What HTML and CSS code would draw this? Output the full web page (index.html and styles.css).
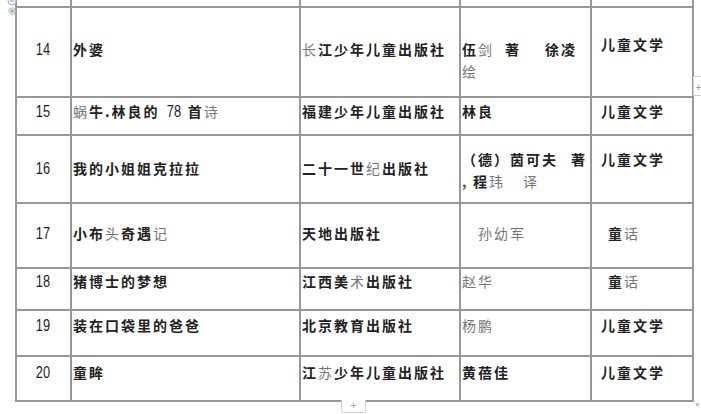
FILE: index.html
```html
<!DOCTYPE html>
<html lang="zh">
<head>
<meta charset="utf-8">
<title>书目</title>
<link rel="stylesheet" href="styles.css">
</head>
<body>
<div class="doc">
  <svg class="h-minus" width="10" height="10" viewBox="0 0 10 10"><circle cx="5" cy="5" r="4" fill="#fff" stroke="#8fb1e0" stroke-width="1"/><line x1="3" y1="5" x2="7" y2="5" stroke="#6f93c9" stroke-width="1"/></svg>
  <svg class="h-plus" width="8" height="8" viewBox="0 0 8 8"><circle cx="4" cy="4" r="3.2" fill="#e6e6e6" stroke="#b5b5b5" stroke-width="0.8"/><line x1="2.3" y1="4" x2="5.7" y2="4" stroke="#888" stroke-width="0.8"/><line x1="4" y1="2.3" x2="4" y2="5.7" stroke="#888" stroke-width="0.8"/></svg>
  <table class="grid">
    <colgroup><col class="w1"><col class="w2"><col class="w3"><col class="w4"><col class="w5"></colgroup>
    <tr class="r0"><td></td><td></td><td></td><td></td><td></td></tr>
    <tr class="r14">
      <td class="n"><span class="num">14</span></td>
      <td>外婆</td>
      <td><span class="lt">长</span>江少年儿童出版社</td>
      <td class="nw">伍<span class="lt">剑</span><span class="gap a"></span>著<span class="gap b"></span>徐凌<br><span class="lt">绘</span></td>
      <td class="c5 up">儿童文学</td>
    </tr>
    <tr class="r15">
      <td class="n"><span class="num">15</span></td>
      <td><span class="lt">蜗</span>牛.林良的 <span class="num">78</span> 首<span class="lt">诗</span></td>
      <td>福建少年儿童出版社</td>
      <td>林良</td>
      <td class="c5">儿童文学</td>
    </tr>
    <tr class="r16">
      <td class="n"><span class="num">16</span></td>
      <td>我的小姐姐克拉拉</td>
      <td>二十一世<span class="lt">纪</span>出版社</td>
      <td class="nw up">（德）茵可夫<span class="gap c"></span>著<br><span class="comma">,</span>程<span class="lt">玮</span><span class="gap d"></span><span class="lt">译</span></td>
      <td class="c5 up">儿童文学</td>
    </tr>
    <tr class="r17">
      <td class="n"><span class="num">17</span></td>
      <td>小布<span class="lt">头</span>奇遇<span class="lt">记</span></td>
      <td>天地出版社</td>
      <td class="ind"><span class="lt">孙幼军</span></td>
      <td class="c5 ind2">童<span class="lt">话</span></td>
    </tr>
    <tr class="r18">
      <td class="n"><span class="num">18</span></td>
      <td>猪博士的梦想</td>
      <td>江西美<span class="lt">术</span>出版社</td>
      <td><span class="lt">赵华</span></td>
      <td class="c5 ind2">童<span class="lt">话</span></td>
    </tr>
    <tr class="r19">
      <td class="n"><span class="num">19</span></td>
      <td>装在口袋里的爸爸</td>
      <td>北京教育出版社</td>
      <td><span class="lt">杨鹏</span></td>
      <td class="c5">儿童文学</td>
    </tr>
    <tr class="r20">
      <td class="n"><span class="num">20</span></td>
      <td>童眸</td>
      <td>江<span class="lt">苏</span>少年儿童出版社</td>
      <td>黄蓓佳</td>
      <td class="c5">儿童文学</td>
    </tr>
  </table>
  <span class="tab-right">+</span>
  <span class="tab-bottom">+</span>
  <span class="corner"></span>
</div>
</body>
</html>
```
FILE: styles.css
```css
html, body {
  margin: 0;
  padding: 0;
  background: #ffffff;
}

.doc {
  position: relative;
  width: 701px;
  height: 414px;
  overflow: hidden;
  font-family: "Noto Sans CJK SC", "Noto Sans", sans-serif;
}

.grid {
  margin-left: 15px;
  border-collapse: collapse;
  table-layout: fixed;
  width: 679px;
  font-size: 14px;
  line-height: 22px;
  font-weight: 700;
  letter-spacing: 2px;
  color: #222222;
}

.w1 { width: 55px; }
.w2 { width: 229px; }
.w3 { width: 160px; }
.w4 { width: 131px; }
.w5 { width: 102px; }

.grid td {
  border: 2px solid #979797;
  vertical-align: top;
  padding: 0 0 0 1px;
  white-space: nowrap;
  overflow: visible;
}

.r0 td { border-top: none; height: 6px; padding: 0; }
.r14 td { border-top: 2px solid #a9c6ee; height: 58px; padding-top: 30px; }
.r14 td.up { padding-top: 25px; }
.r15 td { height: 34px; padding-top: 2px; }
.r16 td { height: 45px; padding-top: 21px; }
.r16 td.up { padding-top: 12px; }
.r17 td { height: 45px; padding-top: 18px; }
.r18 td { height: 39px; padding-top: 1px; }
.r19 td { height: 41px; padding-top: 3px; }
.r20 td { height: 39px; padding-top: 4px; }

.grid td.n {
  text-align: center;
  padding-left: 0;
  padding-right: 2px;
}

.num {
  display: inline-block;
  font-family: "Liberation Sans", sans-serif;
  font-size: 16px;
  font-weight: 400;
  letter-spacing: 0;
  color: #1e1e1e;
  transform: scaleX(0.8);
}

.grid td.c5 { padding-left: 9px; }
.grid td.ind { padding-left: 17px; }
.grid td.ind2 { padding-left: 16px; }

.lt {
  color: #767676;
  font-weight: 400;
}

.gap { display: inline-block; }
.gap.a { width: 11px; }
.gap.b { width: 24px; }
.gap.c { width: 13px; }
.gap.d { width: 18px; }

.comma {
  display: inline-block;
  width: 11px;
  letter-spacing: 0;
  color: #555;
}

.h-minus {
  position: absolute;
  left: 7px;
  top: -4px;
}

.h-plus {
  position: absolute;
  left: 8px;
  top: 7px;
}

.tab-right {
  position: absolute;
  left: 693px;
  top: 76px;
  width: 10px;
  height: 20px;
  border: 1px solid #d2d2d2;
  border-right: none;
  box-sizing: border-box;
  background: #fff;
  color: #9a9a9a;
  font-family: "DejaVu Sans", sans-serif;
  font-size: 9px;
  line-height: 20px;
  text-align: center;
}

.tab-bottom {
  position: absolute;
  left: 341px;
  top: 400px;
  width: 25px;
  height: 13px;
  border: 1px solid #d2d2d2;
  border-top: none;
  border-radius: 0 0 2px 2px;
  box-sizing: border-box;
  background: #fff;
  color: #9a9a9a;
  font-family: "DejaVu Sans", sans-serif;
  font-size: 9px;
  line-height: 11px;
  text-align: center;
}

.corner {
  position: absolute;
  left: 696px;
  top: 403px;
  width: 3px;
  height: 3px;
  background: #c4c4c4;
}
```
